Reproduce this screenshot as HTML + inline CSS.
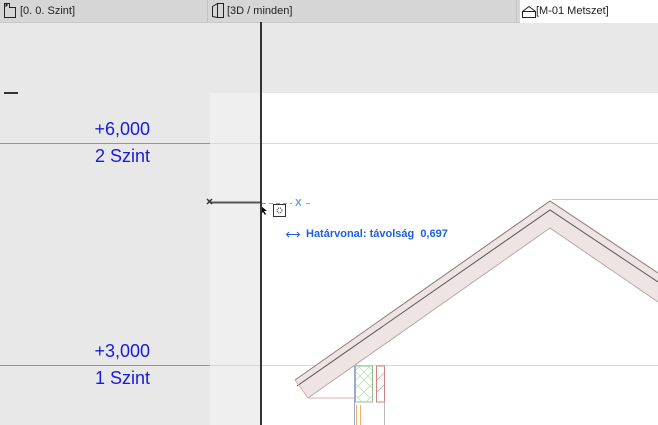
<!DOCTYPE html>
<html><head><meta charset="utf-8"><style>
*{margin:0;padding:0;box-sizing:border-box}
body{width:658px;height:425px;overflow:hidden;background:#e8e8e8;position:relative;font-family:"Liberation Sans",sans-serif}
.tab{position:absolute;top:0;height:22px;font-size:11px;color:#222;line-height:22px}
.lbl{position:absolute;right:508px;color:#1a1adc;font-size:18px;text-align:right;line-height:20px}
</style></head><body>
<div style="position:absolute;left:0;top:0;width:658px;height:23px;background:#d6d6d6;border-bottom:1px solid #c8c8c8"></div>
<div style="position:absolute;left:520px;top:0;width:138px;height:23px;background:#fff"></div>
<div style="position:absolute;left:207px;top:0;width:1px;height:22px;background:#c4c4c4"></div>
<div style="position:absolute;left:516px;top:0;width:1px;height:22px;background:#c4c4c4"></div>
<svg style="position:absolute;left:0;top:0" width="658" height="23">
<path d="M4.5 3.5h5v4h6v10h-11z" fill="none" stroke="#222"/>
<path d="M6 4v3M7 4v2" stroke="#222"/>
<path d="M212.5 6.5l5-3v14l-5-1z M217.5 3.5h6v14h-6" fill="none" stroke="#222"/>
<path d="M522.5 11.5h13v6h-13z M522.5 11.5l6.5-5 6.5 5" fill="none" stroke="#222"/>
</svg>
<div class="tab" style="left:20px">[0. 0. Szint]</div>
<div class="tab" style="left:227px">[3D / minden]</div>
<div class="tab" style="left:536px">[M-01 Metszet]</div>
<div style="position:absolute;left:210px;top:93px;width:50px;height:332px;background:#efefef"></div>
<div style="position:absolute;left:261px;top:93px;width:397px;height:332px;background:#fff"></div>
<div style="position:absolute;left:4px;top:92px;width:14px;height:2px;background:#333"></div>
<div style="position:absolute;left:0;top:143px;width:210px;height:1px;background:#6a9fd3"></div>
<div style="position:absolute;left:210px;top:143px;width:448px;height:1px;background:#c7dcf0"></div>
<div style="position:absolute;left:0;top:365px;width:210px;height:1px;background:#6a9fd3"></div>
<div style="position:absolute;left:210px;top:365px;width:448px;height:1px;background:#c7dcf0"></div>
<div class="lbl" style="top:119px">+6,000</div>
<div class="lbl" style="top:146px">2 Szint</div>
<div class="lbl" style="top:341px">+3,000</div>
<div class="lbl" style="top:368px">1 Szint</div>
<svg style="position:absolute;left:0;top:0" width="658" height="425">
<path d="M295 380L550 201L658 273V302L550 228L308 398Z" fill="#efe4e4"/>
<path d="M295 380L550 201L658 273" fill="none" stroke="#8a7878" stroke-width="1"/>
<path d="M297 386L550 210L658 282" fill="none" stroke="#555" stroke-width="1"/>
<path d="M308 398L550 228L658 302" fill="none" stroke="#b8a8a8" stroke-width="1"/>
<path d="M295 380L308 398H354" fill="none" stroke="#d8b0b0"/>
<path d="M552 199.5H658" stroke="#d8c0c0"/>
<rect x="355.5" y="366" width="17" height="36" fill="#fff" stroke="#8fbf8f"/>
<path d="M356 372l16 16M356 384l14 14M358 366l14 14M368 366l4 4M356 396l6 6M372 372l-16 16M372 384l-14 14M370 366l-14 14M360 366l-4 4M372 396l-6 6" stroke="#b9dcb0" stroke-width="0.8"/>
<path d="M354.5 366V425" stroke="#9aaacc"/>
<rect x="376.5" y="366" width="8" height="36" fill="none" stroke="#d08080"/>
<path d="M377 380l7-7M377 392l7-7" stroke="#e0a0a0" stroke-width="0.8"/>
<path d="M356.5 405V425M360.5 405V425" stroke="#f0b070"/>
<path d="M384.5 402V425" stroke="#bbb"/>
<path d="M210 202.5H260" stroke="#555" stroke-width="2"/>
<path d="M207 199l5 5M212 199l-5 5" stroke="#333" stroke-width="1.5"/>
<path d="M262 203.5H292M306 203.5h6" stroke="#6aaef0" stroke-dasharray="4 3"/>
<text x="295" y="206" fill="#5aa0f0" font-size="10" font-weight="bold" font-family="Liberation Sans">X</text>
<rect x="273.5" y="204.5" width="12" height="12" fill="#fff" stroke="#333"/>
<circle cx="279.5" cy="210.5" r="2.5" fill="none" stroke="#333" stroke-dasharray="1 1"/>
<path d="M261 206l0 8 2-2 2 3 1-1-2-3h3z" fill="#000"/>
<rect x="260" y="22" width="2" height="403" fill="#333"/>
<path d="M287 234.5h12M289 232l-2.5 2.5 2.5 2.5M297 232l2.5 2.5-2.5 2.5" fill="none" stroke="#1e5fe0"/>
</svg>
<div style="position:absolute;left:303px;top:226px;color:#1e5fe0;font-size:11px;font-weight:bold;background:#fff;padding:2px 3px;white-space:pre">Határvonal: távolság  0,697</div>
</body></html>
